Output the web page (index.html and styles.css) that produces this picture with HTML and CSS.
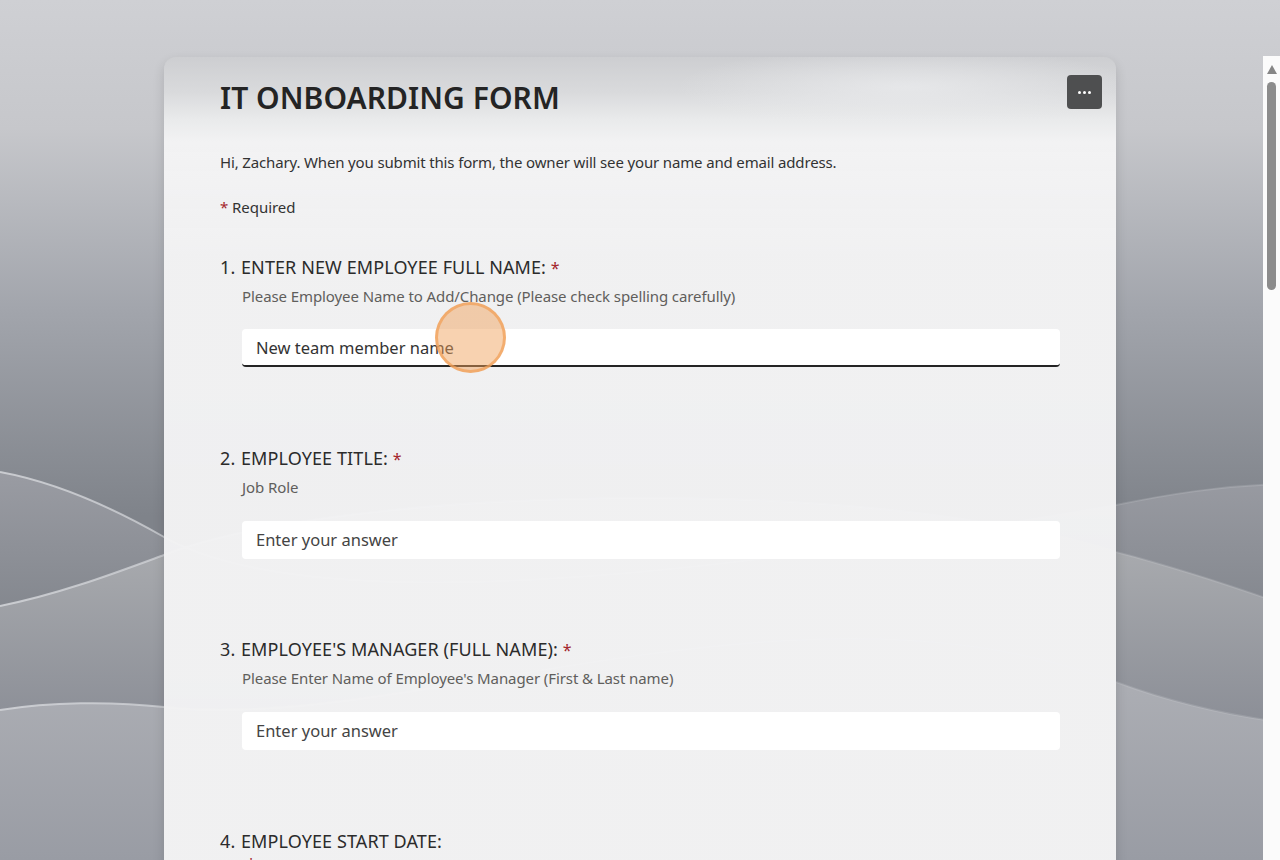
FILE: index.html
```html
<!DOCTYPE html>
<html lang="en">
<head>
    <meta charset="UTF-8">
    <meta name="viewport" content="width=device-width, initial-scale=1.0">
    <title>IT Onboarding Form</title>
    <link rel="stylesheet" href="styles.css">
</head>
<body>
    <svg class="backdrop" viewBox="0 0 1280 860" preserveAspectRatio="none" aria-hidden="true">
        <defs>
            <linearGradient id="sky" x1="0" y1="0" x2="0" y2="1">
                <stop offset="0" stop-color="#cfd0d4"/>
                <stop offset="0.15" stop-color="#c6c7cb"/>
                <stop offset="0.36" stop-color="#a2a5ac"/>
                <stop offset="0.6" stop-color="#7f838a"/>
                <stop offset="1" stop-color="#7f838a"/>
            </linearGradient>
            <linearGradient id="waveA" gradientUnits="userSpaceOnUse" x1="0" y1="470" x2="0" y2="640">
                <stop offset="0" stop-color="#9a9ca3"/>
                <stop offset="1" stop-color="#7f838a"/>
            </linearGradient>
            <linearGradient id="waveB" gradientUnits="userSpaceOnUse" x1="0" y1="550" x2="0" y2="720">
                <stop offset="0" stop-color="#a8aaae"/>
                <stop offset="1" stop-color="#8c8f97"/>
            </linearGradient>
            <linearGradient id="waveC" gradientUnits="userSpaceOnUse" x1="0" y1="690" x2="0" y2="860">
                <stop offset="0" stop-color="#abadb3"/>
                <stop offset="1" stop-color="#999ca4"/>
            </linearGradient>
            <linearGradient id="crest" gradientUnits="userSpaceOnUse" x1="0" y1="0" x2="1280" y2="0">
                <stop offset="0" stop-color="#d4d6da" stop-opacity="0.85"/>
                <stop offset="0.13" stop-color="#d4d6da" stop-opacity="0.7"/>
                <stop offset="0.87" stop-color="#d4d6da" stop-opacity="0.2"/>
                <stop offset="1" stop-color="#d4d6da" stop-opacity="0.2"/>
            </linearGradient>
        </defs>
        <rect width="1280" height="860" fill="url(#sky)"/>
        <path fill="url(#waveA)" d="M0 472C60 483 115 509 164 537C330 630 800 560 1116 505C1170 494 1220 486 1280 484V860H0Z"/>
        <path fill="url(#waveB)" d="M0 606C60 594 115 573 164 555C330 490 850 470 1116 552C1170 566 1220 582 1280 603V860H0Z"/>
        <path fill="url(#waveC)" d="M0 710C50 702 110 701 164 707C400 735 800 560 1116 682C1170 702 1220 714 1280 722V860H0Z"/>
        <g class="crests" stroke="url(#crest)">
            <path d="M0 472C60 483 115 509 164 537C330 630 800 560 1116 505C1170 494 1220 486 1280 484"/>
            <path d="M0 606C60 594 115 573 164 555C330 490 850 470 1116 552C1170 566 1220 582 1280 603"/>
            <path d="M0 710C50 702 110 701 164 707C400 735 800 560 1116 682C1170 702 1220 714 1280 722"/>
        </g>
    </svg>

    <main class="card">
        <button class="more-btn" type="button" aria-label="More options">
            <span class="dot"></span><span class="dot"></span><span class="dot"></span>
        </button>

        <h1 class="form-title">IT ONBOARDING FORM</h1>
        <p class="form-note">Hi, Zachary. When you submit this form, the owner will see your name and email address.</p>
        <p class="form-required"><span class="star">*</span> Required</p>

        <form>
            <div class="question">
                <div class="q-title"><span class="q-num">1.</span>ENTER NEW EMPLOYEE FULL NAME: <span class="star">*</span></div>
                <div class="q-hint">Please Employee Name to Add/Change (Please check spelling carefully)</div>
                <input class="q-input q-input-active" type="text" value="New team member name">
            </div>
            <div class="question">
                <div class="q-title"><span class="q-num">2.</span>EMPLOYEE TITLE: <span class="star">*</span></div>
                <div class="q-hint">Job Role</div>
                <input class="q-input" type="text" placeholder="Enter your answer">
            </div>
            <div class="question question-tall">
                <div class="q-title"><span class="q-num">3.</span>EMPLOYEE'S MANAGER (FULL NAME): <span class="star">*</span></div>
                <div class="q-hint">Please Enter Name of Employee's Manager (First &amp; Last name)</div>
                <input class="q-input" type="text" placeholder="Enter your answer">
            </div>
            <div class="question">
                <div class="q-title"><span class="q-num">4.</span>EMPLOYEE START DATE:</div>
                <div class="q-wrap-star"><span class="star">*</span></div>
            </div>
        </form>

        <div class="click-marker"></div>
    </main>

    <div class="scrollbar">
        <div class="scroll-arrow"></div>
        <div class="scroll-thumb"></div>
    </div>
</body>
</html>
```

FILE: styles.css
```css
html, body {
    height: 100%;
}
body {
    margin: 0;
    height: 860px;
    overflow: hidden;
    position: relative;
    padding-top: 57px;
    box-sizing: border-box;
    font-family: "Noto Sans", "Open Sans", Arial, sans-serif;
    color: #242424;
}
.backdrop {
    position: absolute;
    top: 0;
    left: 0;
    width: 1280px;
    height: 860px;
}
.crests path {
    fill: none;
    stroke-width: 2;
}
.card {
    position: relative;
    width: 952px;
    box-sizing: border-box;
    margin: 0 auto;
    padding: 18px 56px 60px;
    border-radius: 12px 12px 0 0;
    background:
        radial-gradient(ellipse 230px 40px at 78% 30px, rgba(236, 237, 239, 0.7), rgba(236, 237, 239, 0)),
        linear-gradient(to bottom, #cdced1 0, #d9dadc 35px, #e9eaeb 62px, #f2f2f3 85px, rgba(242, 242, 243, 0.975) 200px);
    box-shadow: 0 5px 12px rgba(0, 0, 0, 0.14);
}
.more-btn {
    position: absolute;
    top: 18px;
    right: 14px;
    width: 35px;
    height: 34px;
    padding: 0;
    border: none;
    border-radius: 4px;
    background-color: #4e4f50;
    display: flex;
    align-items: center;
    justify-content: center;
    gap: 2px;
}
.dot {
    width: 3px;
    height: 3px;
    border-radius: 50%;
    background-color: #fff;
}
.form-title {
    margin: 0;
    font-size: 30px;
    line-height: 46px;
    font-weight: 600;
    letter-spacing: 0.05px;
    color: #242424;
}
.form-note {
    margin: 30px 0 0;
    font-size: 15px;
    line-height: 22px;
    letter-spacing: -0.15px;
    color: #333;
}
.form-required {
    margin: 23px 0 0;
    font-size: 15px;
    line-height: 22px;
    letter-spacing: -0.05px;
    color: #333;
}
.star {
    color: #a4262c;
}
.question {
    height: 191px;
    box-sizing: border-box;
}
.question-tall {
    height: 192px;
}
form {
    margin-top: 36px;
}
.q-title {
    height: 26px;
    font-size: 18px;
    line-height: 26px;
    letter-spacing: 0.1px;
    white-space: nowrap;
    color: #2b2b2b;
}
.q-title .star {
    font-size: 16px;
}
.q-num {
    display: inline-block;
    width: 21px;
}
.q-hint {
    margin: 5px 0 0 22px;
    font-size: 15px;
    line-height: 22px;
    letter-spacing: -0.09px;
    color: #605e5c;
}
.q-wrap-star {
    margin: -2px 0 0 27px;
    font-size: 15px;
    line-height: 22px;
}
.q-input {
    display: block;
    width: 818px;
    height: 38px;
    box-sizing: border-box;
    margin: 23px 0 0 22px;
    padding: 0 14px 2px;
    border: none;
    border-radius: 4px;
    background-color: #fff;
    font-family: inherit;
    font-size: 16.5px;
    color: #333;
    outline: none;
}
.q-input::placeholder {
    color: #444;
    opacity: 1;
}
.q-input-active {
    margin-top: 22px;
    padding: 1px 14px 0;
    border-bottom: 2px solid #242424;
}
.click-marker {
    position: absolute;
    left: 271px;
    top: 245px;
    width: 71px;
    height: 71px;
    box-sizing: border-box;
    border: 3px solid rgba(240, 160, 90, 0.75);
    border-radius: 50%;
    background-color: rgba(240, 160, 90, 0.48);
}
.scrollbar {
    position: absolute;
    top: 56px;
    right: 0;
    bottom: 0;
    width: 17px;
    background-color: #fbfbfb;
}
.scroll-arrow {
    width: 0;
    height: 0;
    margin: 9px auto 0 auto;
    border-left: 5.5px solid transparent;
    border-right: 5.5px solid transparent;
    border-bottom: 9px solid #868686;
}
.scroll-thumb {
    width: 9px;
    height: 208px;
    margin: 8px 0 0 4px;
    border-radius: 5px;
    background-color: #8c8c8c;
}
```
